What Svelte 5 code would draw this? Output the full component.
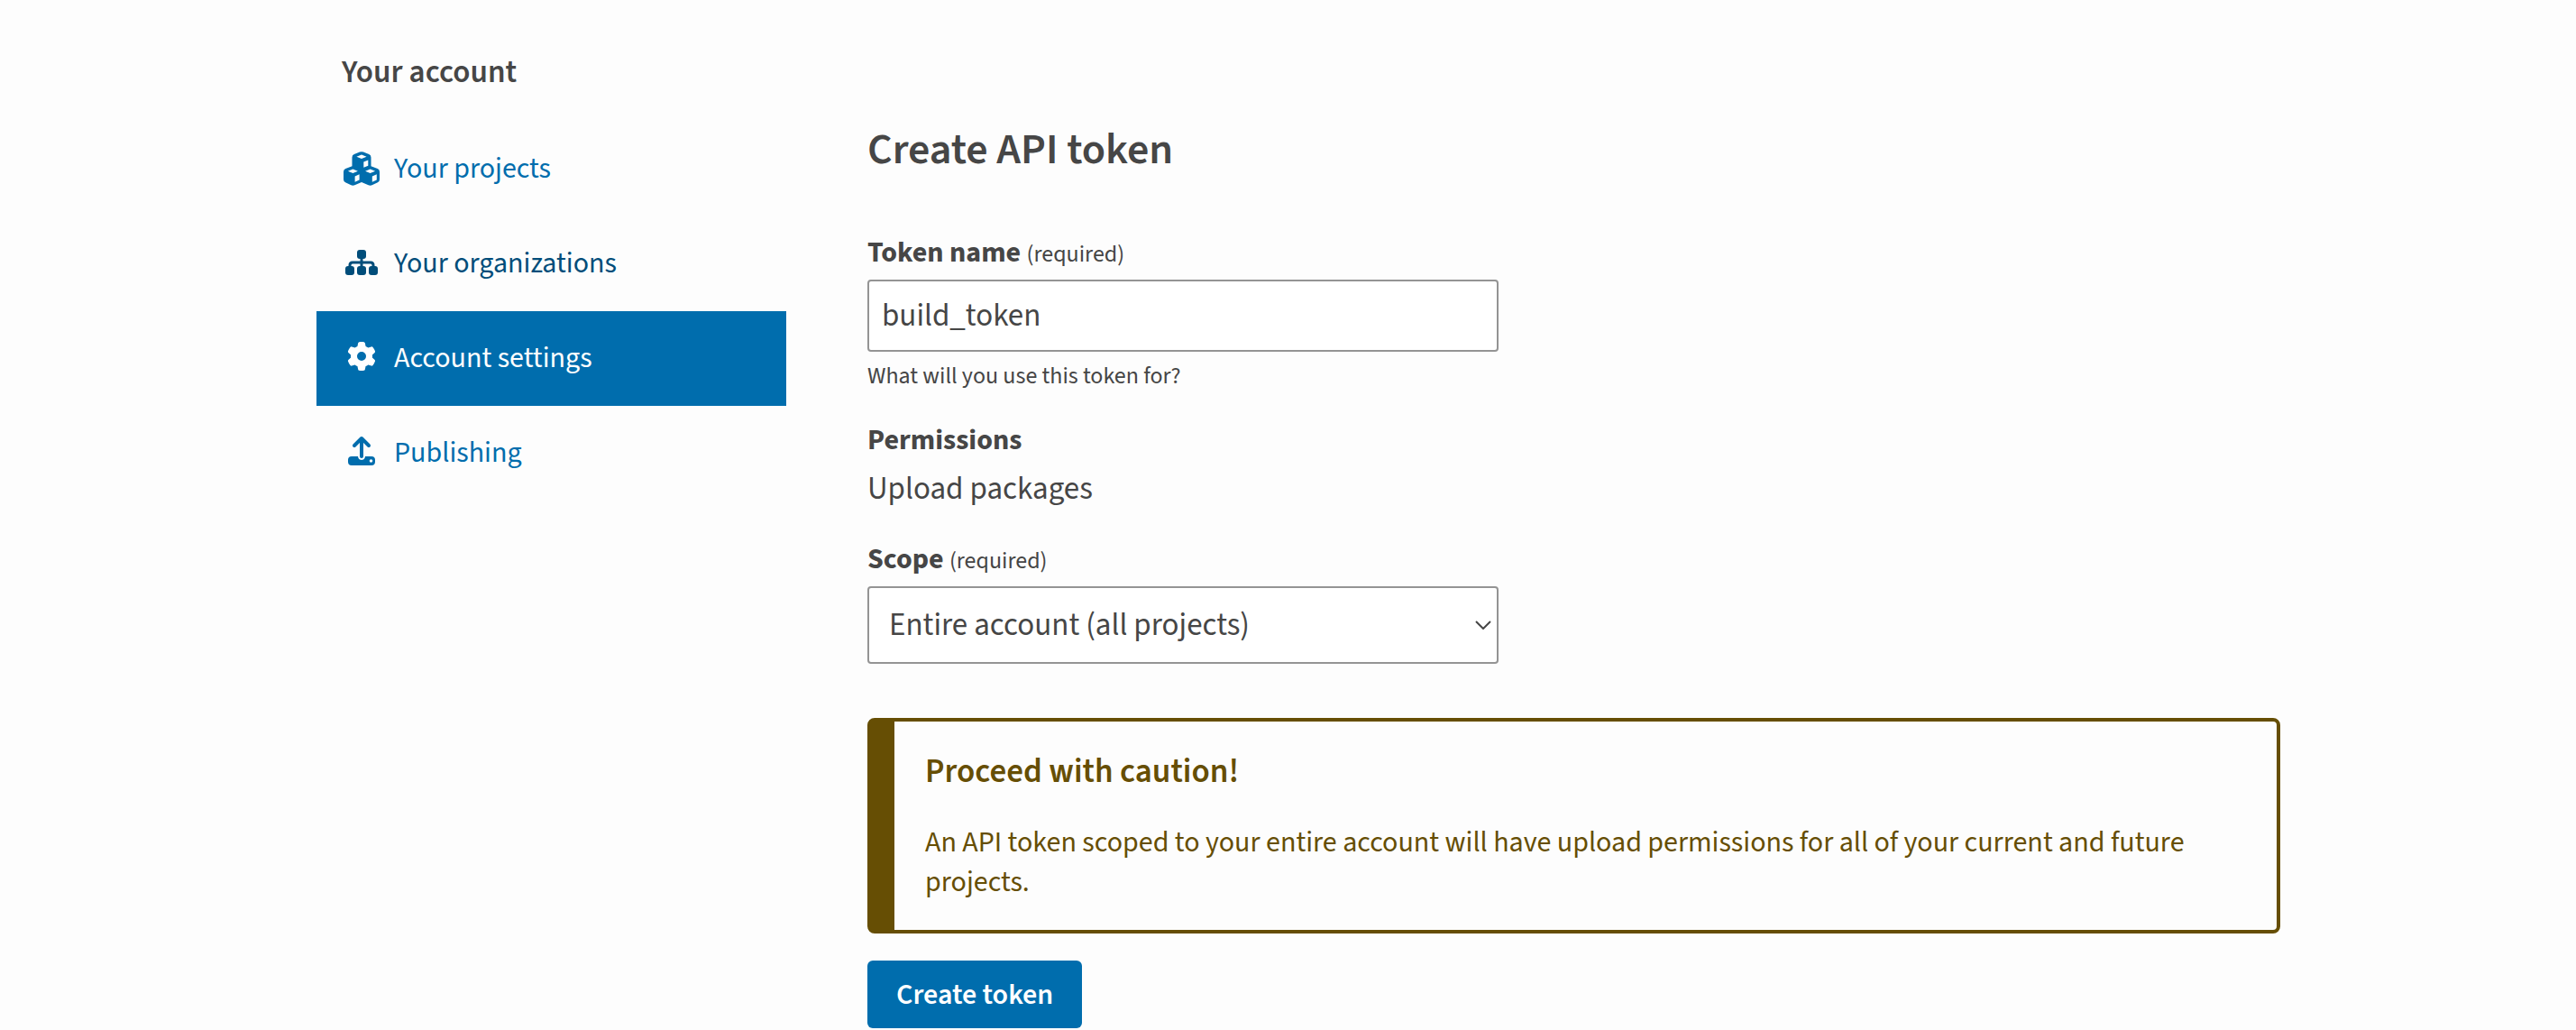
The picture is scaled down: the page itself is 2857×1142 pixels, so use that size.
<script lang="ts">
  let tokenName = $state('build_token');
  let scope = $state('all');

  const items = [
    { id: 'projects', label: 'Your projects', visited: false, current: false },
    { id: 'organizations', label: 'Your organizations', visited: true, current: false },
    { id: 'settings', label: 'Account settings', visited: false, current: true },
    { id: 'publishing', label: 'Publishing', visited: false, current: false }
  ];
</script>

<svelte:head><title>Create API token</title></svelte:head>

<div class="layout">
  <aside>
    <h2 class="side-title">Your account</h2>
    <nav aria-label="Your account">
      {#each items as item}
        <a
          href={'#' + item.id}
          class="item"
          class:visited={item.visited}
          class:current={item.current}
          aria-current={item.current ? 'page' : undefined}
        >
          {#if item.id === 'projects'}
            <svg class="icon" viewBox="0 0 44 40" aria-hidden="true">
              <path fill="currentColor" fill-rule="evenodd" d="M20 1.6q2-.8 4 0l6.200 2.400q2.300 1 2.300 3.400v9.800l7.200 2.900q2.300 1 2.300 3.400v8.500q0 2.300-2.100 3.300l-6.300 2.900q-2 .9-4 0L22 35l-7.600 3.200q-2 .9-4 0l-6.300-2.900Q2 34.300 2 32v-8.500q0-2.400 2.300-3.400l7.200-2.900V7.400Q11.500 5 13.800 4zM22 4.500l-5.600 2.300 5.600 2.300 5.600-2.300zm2.300 8v6.300l5-2.100v-6.300zM12.400 20.600l-5.500 2.200 5.500 2.300 5.500-2.300zm2.200 7.800v6.400l5-2.300v-6.200zm17-7.800-5.500 2.200 5.500 2.300 5.500-2.300zm2.200 7.800v6.400l5-2.300v-6.200z"/>
            </svg>
          {:else if item.id === 'organizations'}
            <svg class="icon" viewBox="0 0 44 40" aria-hidden="true">
              <g fill="currentColor">
                <rect x="17" y="5" width="10" height="10" rx="3"/>
                <rect x="4" y="23" width="10" height="10" rx="3"/>
                <rect x="17" y="23" width="10" height="10" rx="3"/>
                <rect x="30" y="23" width="10" height="10" rx="3"/>
              </g>
              <path fill="none" stroke="currentColor" stroke-width="3" d="M22 13v12M9 25v-3q0-3 3-3h20q3 0 3 3v3"/>
            </svg>
          {:else if item.id === 'settings'}
            <svg class="icon" viewBox="-96 -32 704 640" aria-hidden="true">
              <path fill="currentColor" d="M495.900 166.600c3.200 8.700.5 18.400-6.400 24.600l-43.300 39.400c1.100 8.300 1.700 16.800 1.700 25.400s-.6 17.100-1.700 25.400l43.300 39.400c6.900 6.200 9.600 15.900 6.400 24.600-4.400 11.900-9.700 23.300-15.800 34.300l-4.700 8.100c-6.600 11-14 21.400-22.100 31.200-5.900 7.200-15.700 9.600-24.500 6.800l-55.700-17.700c-13.400 10.300-28.200 18.900-44 25.400l-12.500 57.100c-2 9.100-9 16.300-18.200 17.800-13.800 2.300-28 3.500-42.500 3.500s-28.700-1.200-42.500-3.500c-9.200-1.500-16.200-8.700-18.200-17.800l-12.500-57.100c-15.800-6.500-30.600-15.100-44-25.400L83.100 425.900c-8.800 2.800-18.600.3-24.500-6.800-8.100-9.800-15.500-20.200-22.100-31.200l-4.700-8.100c-6.100-11-11.400-22.400-15.800-34.300-3.200-8.700-.5-18.400 6.400-24.600l43.300-39.400C64.600 273.100 64 264.600 64 256s.6-17.100 1.700-25.400L22.400 191.200c-6.900-6.200-9.600-15.900-6.400-24.600 4.400-11.900 9.700-23.300 15.800-34.300l4.700-8.100c6.600-11 14-21.400 22.100-31.200 5.900-7.200 15.700-9.600 24.500-6.800l55.700 17.700c13.400-10.300 28.200-18.900 44-25.400l12.500-57.100c2-9.100 9-16.300 18.200-17.800C227.300 1.200 241.500 0 256 0s28.700 1.200 42.500 3.500c9.200 1.500 16.200 8.700 18.200 17.800l12.500 57.100c15.800 6.500 30.600 15.100 44 25.400l55.700-17.700c8.800-2.800 18.600-.3 24.500 6.800 8.100 9.800 15.500 20.200 22.100 31.200l4.700 8.100c6.100 11 11.400 22.400 15.800 34.300zM256 336a80 80 0 1 0 0-160 80 80 0 1 0 0 160z"/>
            </svg>
          {:else}
            <svg class="icon" viewBox="0 0 44 40" aria-hidden="true">
              <path fill="none" stroke="currentColor" stroke-width="4" stroke-linecap="round" stroke-linejoin="round" d="M22 24V5M14 12l8-8 8 8"/>
              <path fill="currentColor" fill-rule="evenodd" d="M11 24h7q.5 4 4 4t4-4h7q4 0 4 4v2q0 4-4 4H11q-4 0-4-4v-2q0-4 4-4zm21.500 3.200a1.800 1.800 0 1 0 0 3.600 1.800 1.800 0 0 0 0-3.600z"/>
            </svg>
          {/if}
          <span>{item.label}</span>
        </a>
      {/each}
    </nav>
  </aside>

  <main>
    <h1>Create API token</h1>
    <form onsubmit={(e) => e.preventDefault()}>
      <div class="group">
        <label for="token-name">Token name <small>(required)</small></label>
        <input id="token-name" type="text" required bind:value={tokenName} aria-describedby="token-help" />
        <p id="token-help" class="help">What will you use this token for?</p>
      </div>

      <div class="group permissions">
        <h3>Permissions</h3>
        <p>Upload packages</p>
      </div>

      <div class="group">
        <label for="scope">Scope <small>(required)</small></label>
        <div class="select-wrap">
          <select id="scope" required bind:value={scope}>
            <option value="all">Entire account (all projects)</option>
          </select>
          <svg class="chevron" viewBox="0 0 18 10" aria-hidden="true">
            <path fill="none" stroke="currentColor" stroke-width="2" d="M1 1l8 8 8-8"/>
          </svg>
        </div>
      </div>

      <div class="callout" role="alert">
        <h3>Proceed with caution!</h3>
        <p>An API token scoped to your entire account will have upload permissions for all of your current and future projects.</p>
      </div>

      <button type="submit">Create token</button>
    </form>
  </main>
</div>

<style>
  :global(body) {
    margin: 0;
    background: #fdfdfd;
    color: #464646;
    font-family: 'Source Sans 3', 'Noto Sans CJK SC', 'Noto Sans', sans-serif;
    font-size: 32px;
    line-height: 44px;
  }

  h1, h2, h3, p {
    margin: 0;
  }

  .layout {
    box-sizing: border-box;
    max-width: 2201px;
    margin: 0 auto;
    padding-left: 23px;
    display: grid;
    grid-template-columns: 521px minmax(0, 1fr);
    column-gap: 90px;
  }

  aside {
    padding-top: 58px;
  }

  .side-title {
    padding: 0 28px;
    margin-bottom: 33px;
    font-size: 35px;
    line-height: 44px;
    font-weight: 600;
  }

  .item {
    box-sizing: border-box;
    display: flex;
    align-items: center;
    gap: 14px;
    height: 105px;
    padding: 0 28px 2px;
    color: #006dad;
    text-decoration: none;
  }

  .item.visited {
    color: #004d7a;
  }

  .item.current {
    background: #006dad;
    color: #fff;
  }

  .icon {
    width: 44px;
    height: 40px;
    flex: none;
  }

  main {
    padding-top: 134px;
  }

  h1 {
    margin-bottom: 60px;
    font-size: 48px;
    line-height: 64px;
    font-weight: 600;
  }

  .group {
    margin-bottom: 24px;
  }

  label {
    display: block;
    margin-bottom: 6px;
    font-weight: 700;
  }

  small {
    font-size: 26px;
    font-weight: 400;
  }

  input,
  select {
    box-sizing: border-box;
    display: block;
    width: 100%;
    border: 2px solid #949494;
    border-radius: 4px;
    background: #fff;
    color: inherit;
    font-family: inherit;
    font-size: 35px;
    line-height: 48px;
  }

  input,
  .select-wrap {
    max-width: 700px;
  }

  input {
    height: 80px;
    padding: 0 14px;
  }

  .help {
    margin-top: 9px;
    margin-bottom: 31px;
    font-size: 26px;
    line-height: 36px;
  }

  .permissions h3 {
    font-size: 32px;
    line-height: 44px;
    font-weight: 700;
  }

  .permissions p {
    font-size: 35px;
    line-height: 64px;
  }

  .select-wrap {
    position: relative;
  }

  select {
    height: 86px;
    padding: 0 48px 0 22px;
    appearance: none;
  }

  .chevron {
    position: absolute;
    right: 8px;
    top: 38px;
    width: 18px;
    height: 10px;
    pointer-events: none;
  }

  .callout {
    margin-top: 60px;
    margin-bottom: 30px;
    padding: 32px 34px 31px;
    border: 4px solid #664e04;
    border-left-width: 30px;
    border-radius: 8px;
    color: #664e04;
  }

  .callout h3 {
    margin-bottom: 32px;
    font-size: 37px;
    line-height: 48px;
    font-weight: 600;
  }

  button {
    display: block;
    height: 75px;
    padding: 0 32px;
    border: 0;
    border-radius: 6px;
    background: #006dad;
    color: #fff;
    font-family: inherit;
    font-size: 32px;
    line-height: 44px;
    font-weight: 600;
  }
</style>
